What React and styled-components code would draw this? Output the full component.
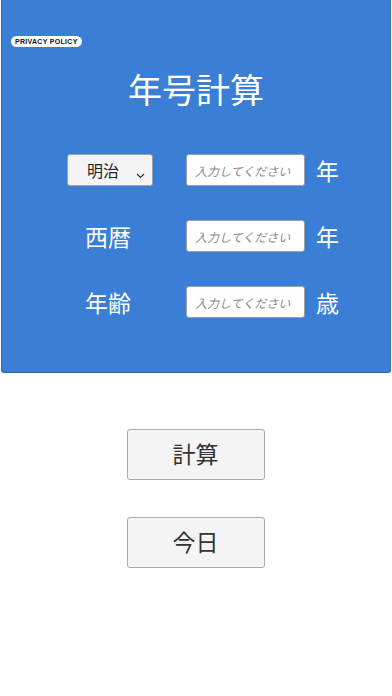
import React from 'react';
import styled, { createGlobalStyle } from 'styled-components';

const Global = createGlobalStyle`
  body {
    margin: 0;
    background: #fff;
    font-family: "Noto Sans CJK JP", "Noto Sans", sans-serif;
  }
`;

// Blue header panel
const Panel = styled.div`
  box-sizing: border-box;
  margin: 0 1px;
  height: 373px;
  background: #3a7ed6;
  border: 1px solid #2f6bb8;
  border-top: none;
  border-radius: 0 0 3px 3px;
  padding-top: 36px;
`;

const Privacy = styled.a`
  display: block;
  width: fit-content;
  margin-left: 9px;
  height: 11px;
  line-height: 11px;
  padding: 0 4px;
  background: #fff;
  border-radius: 6px;
  color: #111;
  font-family: "Liberation Sans", Arial, sans-serif;
  font-weight: bold;
  font-size: 7px;
  letter-spacing: 0.3px;
  text-decoration: none;
`;

const Title = styled.h1`
  margin: 17px 0 0;
  text-align: center;
  color: #fff;
  font-weight: 400;
  font-size: 34px;
  line-height: 50px;
`;

const Form = styled.div`
  display: flex;
  flex-direction: column;
  gap: 34px;
  margin-top: 39px;
  padding-left: 65px;
`;

const Row = styled.div`
  display: grid;
  grid-template-columns: 86px 119px auto;
  column-gap: 33px;
  align-items: center;
  height: 32px;
  & > :nth-child(3) {
    margin-left: -22px;
  }
`;

const Label = styled.span`
  color: #fff;
  font-size: 23px;
  text-align: center;
  padding-right: 4px;
`;

const Unit = styled.span`
  color: #fff;
  font-size: 23px;
`;

const Select = styled.div`
  box-sizing: border-box;
  position: relative;
  height: 32px;
  background: #f4f4f4;
  border: 1px solid #9aa3ad;
  border-radius: 3px;
  color: #222;
  font-size: 16px;
  line-height: 30px;
  padding-left: 19px;
`;

const Chevron = styled.svg`
  position: absolute;
  right: 7px;
  bottom: 6px;
`;

const Input = styled.input`
  box-sizing: border-box;
  width: 119px;
  height: 32px;
  border: 1px solid #9aa3ad;
  border-radius: 3px;
  background: #fff;
  padding: 0 8px;
  font-family: "Noto Sans CJK JP", sans-serif;
  font-size: 12px;
  &::placeholder {
    color: #8a8a8a;
    font-style: italic;
  }
`;

const Buttons = styled.div`
  display: flex;
  flex-direction: column;
  align-items: center;
  gap: 37px;
  margin-top: 56px;
  padding-right: 1px;
`;

const Button = styled.button`
  box-sizing: border-box;
  width: 138px;
  height: 51px;
  background: #f4f4f4;
  border: 1px solid #a9a9a9;
  border-radius: 3px;
  color: #333;
  font-family: "Noto Sans CJK JP", sans-serif;
  font-size: 23px;
  padding: 0 0 4px;
`;

const InputRow = ({ left, unit }) => (
  <Row>
    {left}
    <Input placeholder="入力してください" />
    <Unit>{unit}</Unit>
  </Row>
);

export default function App() {
  return (
    <>
      <Global />
      <Panel>
        <Privacy href="#">PRIVACY POLICY</Privacy>
        <Title>年号計算</Title>
        <Form>
          <InputRow
            left={
              <Select>
                明治
                <Chevron width="9" height="6" viewBox="0 0 9 6">
                  <path d="M1 1l3.5 3.5L8 1" fill="none" stroke="#333" strokeWidth="1.2" />
                </Chevron>
              </Select>
            }
            unit="年"
          />
          <InputRow left={<Label>西暦</Label>} unit="年" />
          <InputRow left={<Label>年齢</Label>} unit="歳" />
        </Form>
      </Panel>
      <Buttons>
        <Button>計算</Button>
        <Button>今日</Button>
      </Buttons>
    </>
  );
}
